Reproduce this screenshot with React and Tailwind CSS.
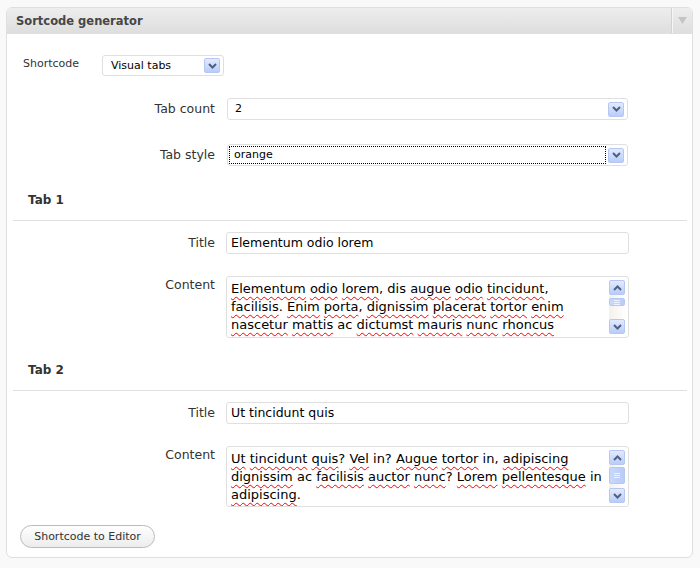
import React from "react";

const Chevron = ({ up }) => (
  <svg width="9" height="6" viewBox="0 0 9 6" className="block">
    <polyline
      points={up ? "1,5 4.5,1.5 8,5" : "1,1 4.5,4.5 8,1"}
      fill="none"
      stroke="#4d6185"
      strokeWidth="2"
    />
  </svg>
);

const XpButton = ({ up, className = "" }) => (
  <div
    className={`flex items-center justify-center border border-[#b5c7f2] rounded-[2px] bg-gradient-to-b from-[#e3eafd] to-[#b9ccf8] ${className}`}
  >
    <Chevron up={up} />
  </div>
);

const Select = ({ value, width, focused, small }) => (
  <div
    className={`flex items-center bg-white border border-[#dfdfdf] rounded-[3px] ${width} ${
      small ? "h-[21px]" : "h-[22px]"
    } p-[1px]`}
  >
    {focused ? (
      <div className="flex-1 h-full mr-[2px] border border-dotted border-black flex items-center pl-[4px] text-black">
        {value}
      </div>
    ) : (
      <div className={`flex-1 text-black ${small ? "pl-[7px]" : "pl-[6px]"}`}>{value}</div>
    )}
    <XpButton className="w-[16px] h-[15px] mr-[2px]" />
  </div>
);

const Sq = ({ children }) => (
  <span className="underline decoration-wavy decoration-[#ff0000] decoration-1 underline-offset-[3px]">
    {children}
  </span>
);

const TextArea = ({ lines, height, thumb }) => (
  <div
    className={`ml-[9px] w-[403px] ${height} border border-[#dfdfdf] rounded-[3px] bg-white flex overflow-hidden`}
  >
    <div className="flex-1 pl-[4px] pt-[3px] text-[13px] leading-[18px] text-black overflow-hidden">
      {lines.map((l, i) => (
        <div key={i} className="whitespace-nowrap">
          {l}
        </div>
      ))}
    </div>
    <div className="w-[16px] mr-[3px] my-[3px] flex flex-col bg-gradient-to-r from-[#f3f1ec] to-[#fefefe]">
      <XpButton up className="h-[15px]" />
      <div className="flex-1 flex flex-col">
        <div
          className={`${thumb} border border-[#b5c7f2] rounded-[2px] bg-gradient-to-r from-[#c9d8fc] to-[#b9ccf8] flex flex-col items-center justify-center gap-[1px]`}
        >
          <div className="w-[6px] h-px bg-[#eef3fe]" />
          <div className="w-[6px] h-px bg-[#eef3fe]" />
          <div className="w-[6px] h-px bg-[#eef3fe]" />
        </div>
      </div>
      <XpButton className="h-[15px]" />
    </div>
  </div>
);

const Row = ({ label, children, className = "", top }) => (
  <div className={`flex ${top ? "items-start" : "items-center"} ${className}`}>
    <div className={`w-[208px] text-right text-[#333] text-[12.5px] ${top ? "pt-[2px]" : ""}`}>{label}</div>
    {children}
  </div>
);

const TabHeading = ({ children, className = "" }) => (
  <div
    className={`ml-[6px] mr-[5px] pl-[15px] pb-[13px] border-b border-[#dfdfdf] font-bold text-[12px] text-[#333] ${className}`}
  >
    {children}
  </div>
);

export default function App() {
  return (
    <div className="w-[700px] h-[568px] bg-[#f9f9f9] pt-[7px] pl-[6px] font-['DejaVu_Sans',sans-serif] text-[11px] leading-[14px]">
      <div className="w-[687px] h-[551px] bg-white border border-[#dfdfdf] rounded-[6px] overflow-hidden flex flex-col">
        <div className="h-[26px] flex items-stretch border-b border-[#dfdfdf] bg-gradient-to-b from-[#ededed] to-[#dedede]">
          <div className="flex-1 pl-[9px] flex items-center font-bold text-[11.5px] text-[#464646]">
            Sortcode generator
          </div>
          <div className="w-[21px] border-l border-[#d2d2d2] shadow-[inset_1px_0_0_#f6f6f6] flex items-center justify-center">
            <svg width="9" height="7" viewBox="0 0 9 7">
              <polygon points="0,0 9,0 4.5,7" fill="#c4c4c4" />
            </svg>
          </div>
        </div>

        <div className="flex items-start mt-[21px] pl-[16px]">
          <div className="w-[79px] pt-[2px] text-[#333]">Shortcode</div>
          <Select value="Visual tabs" width="w-[122px]" small />
        </div>

        <Row label="Tab count" className="mt-[22px]">
          <div className="ml-[12px]">
            <Select value="2" width="w-[401px]" />
          </div>
        </Row>
        <Row label="Tab style" className="mt-[24px]">
          <div className="ml-[12px]">
            <Select value="orange" width="w-[401px]" focused />
          </div>
        </Row>

        <TabHeading className="mt-[27px]">Tab 1</TabHeading>
        <Row label="Title" className="mt-[11px]">
          <div className="ml-[11px] w-[403px] h-[22px] border border-[#dfdfdf] rounded-[3px] bg-white pl-[4px] flex items-center text-black text-[12.5px]">
            Elementum odio lorem
          </div>
        </Row>
        <Row label="Content" className="mt-[22px]" top>
          <div className="ml-[2px]">
            <TextArea
              height="h-[62px]"
              thumb="h-[8px] mt-[3px]"
              lines={[
                <>
                  <Sq>Elementum</Sq> <Sq>odio</Sq> <Sq>lorem</Sq>, dis <Sq>augue</Sq> <Sq>odio</Sq>{" "}
                  <Sq>tincidunt</Sq>,
                </>,
                <>
                  <Sq>facilisis</Sq>. <Sq>Enim</Sq> <Sq>porta</Sq>, <Sq>dignissim</Sq> <Sq>placerat</Sq>{" "}
                  <Sq>tortor</Sq> <Sq>enim</Sq>
                </>,
                <>
                  <Sq>nascetur</Sq> <Sq>mattis</Sq> ac <Sq>dictumst</Sq> <Sq>mauris</Sq> <Sq>nunc</Sq>{" "}
                  <Sq>rhoncus</Sq>
                </>,
              ]}
            />
          </div>
        </Row>

        <TabHeading className="mt-[25px]">Tab 2</TabHeading>
        <Row label="Title" className="mt-[11px]">
          <div className="ml-[11px] w-[403px] h-[22px] border border-[#dfdfdf] rounded-[3px] bg-white pl-[4px] flex items-center text-black text-[12.5px]">
            Ut tincidunt quis
          </div>
        </Row>
        <Row label="Content" className="mt-[22px]" top>
          <div className="ml-[2px]">
            <TextArea
              height="h-[61px]"
              thumb="h-[17px] mt-[2px]"
              lines={[
                <>
                  <Sq>Ut</Sq> <Sq>tincidunt</Sq> <Sq>quis</Sq>? <Sq>Vel</Sq> in? <Sq>Augue</Sq>{" "}
                  <Sq>tortor</Sq> in, <Sq>adipiscing</Sq>
                </>,
                <>
                  <Sq>dignissim</Sq> ac <Sq>facilisis</Sq> <Sq>auctor</Sq> <Sq>nunc</Sq>? <Sq>Lorem</Sq>{" "}
                  <Sq>pellentesque</Sq> in
                </>,
                <>
                  <Sq>adipiscing</Sq>.
                </>,
              ]}
            />
          </div>
        </Row>

        <div className="mt-[18px] ml-[13px]">
          <button className="h-[23px] w-[135px] rounded-full border border-[#bbbbbb] bg-gradient-to-b from-white to-[#ececec] text-[#333] text-[11px]">
            Shortcode to Editor
          </button>
        </div>
      </div>
    </div>
  );
}
